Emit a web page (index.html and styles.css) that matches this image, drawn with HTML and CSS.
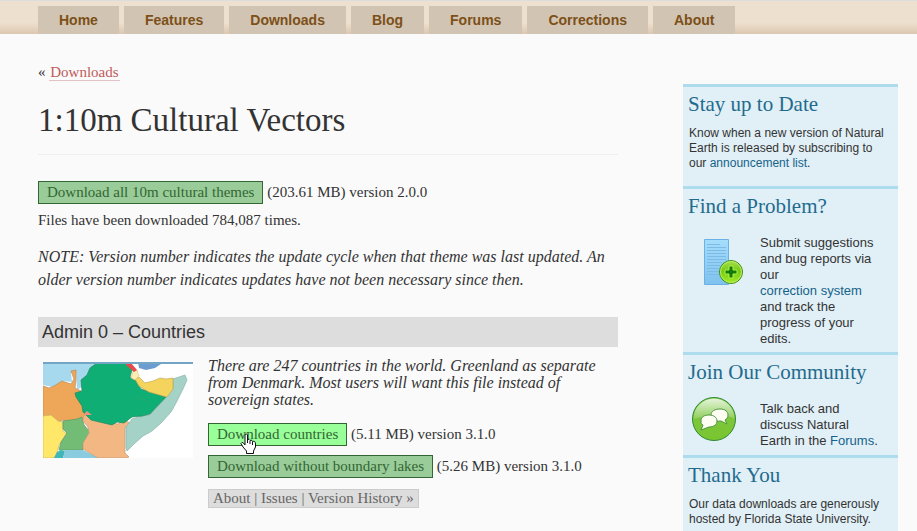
FILE: index.html
```
<!DOCTYPE html>
<html lang="en">
<head>
  <meta charset="UTF-8">
  <meta name="viewport" content="width=device-width, initial-scale=1">
  <title>1:10m Cultural Vectors</title>
  <link rel="stylesheet" href="styles.css">
</head>
<body>

  <nav class="main-nav">
    <a href="#">Home</a>
    <a href="#">Features</a>
    <a href="#">Downloads</a>
    <a href="#">Blog</a>
    <a href="#">Forums</a>
    <a href="#">Corrections</a>
    <a href="#">About</a>
  </nav>

  <div class="page">
    <main>
      <p class="breadcrumb">« <a href="#">Downloads</a></p>
      <h1>1:10m Cultural Vectors</h1>

      <p class="download-row"><a class="download" href="#">Download all 10m cultural themes</a> (203.61 MB) version 2.0.0</p>
      <p class="count">Files have been downloaded 784,087 times.</p>
      <p class="note">NOTE: Version number indicates the update cycle when that theme was last updated. An older version number indicates updates have not been necessary since then.</p>

      <h2>Admin 0 – Countries</h2>
      <div class="theme">
        <svg class="map" viewBox="0 0 150 96" role="img" aria-label="Map of countries">
          <rect width="150" height="96" fill="#fff"/>
          <path d="M0 0h56L46 10 40 24 34 28 33 10 28 11 29 20 20 19 10 25 0 23Z" fill="#a6d9ee"/>
          <path d="M95 0h26l-9 6-9 2-7-2Z" fill="#6c9dd0"/>
          <path d="M0 24l6 2 5-2 8-5 9 3 3-5-3-8 5-1v10l-1 8 6 3 1 6 8 15-3 7-5 1-5 3-14-3-5 2-7-6-8 1Z" fill="#eea758" stroke="#b98e5d" stroke-width=".7"/>
          <path d="M0 54l8-1 7 6 5 1 0 9 4 3-8 11-2 8-3 5H0Z" fill="#ffe76a" stroke="#c9b467" stroke-width=".7"/>
          <path d="M20 59l14-2 5-2 2 8 6 7-3 7-4 5v6H16l2-8 6-9-4-4Z" fill="#72bc75" stroke="#5d986c" stroke-width=".7"/>
          <path d="M14 90l4-2 4 1-2 7h-9Z" fill="#40b7b6"/>
          <path d="M22 88h18l16 8H20Z" fill="#8accdf"/>
          <path d="M40 55l4-4 8 4 8 3 8 3 7 1 6-4 6 3-5 5v25l4 4-4 1H55l-15-9v-6l6-10-1-6-5-6Z" fill="#f3b783" stroke="#c1997b" stroke-width=".7"/>
          <path d="M83 65l6-8 10-3 8-1 13-14 4-5 6-8V17l12-4 2 5-4 9-7 14-5 9-10 11-9 8-9 5-9 8-7 7-1-4Z" fill="#a4d2c6" stroke="#8ab5ad" stroke-width=".7"/>
          <path d="M55 1h30l4 7-2 7 6 4 5 8 25 8-16 17-8 2-10 1-8 6-7-1-5 3-21-5-8-8-1-6-6-9-1-4 7-2-1-11 6-5 3-7 7-5Z" fill="#0eae74" stroke="#26865e" stroke-width=".7"/>
          <path d="M92 17l4-2 6 6 8-2 7-3 6 1 7-1v11l-6 8-18-5-10-6Z" fill="#f5d45e" stroke="#c2aa55" stroke-width=".7"/>
          <path d="M90 9l4-1 2 6-4 4-4-2Z" fill="#fbeeb0" stroke="#c8b77f" stroke-width=".5"/>
          <path d="M83 1h5l6 7-3 2-8-7Z" fill="#e44b4a"/>
          <path d="M40 53l4-4 5 4Z" fill="#ee927c"/>
          <path d="M92 34l12 5" stroke="#29a96e" fill="none"/>
          <rect width="150" height="2" fill="#73a5c4"/>
        </svg>
        <div class="theme-info">
          <p class="about-theme">There are 247 countries in the world. Greenland as separate from Denmark. Most users will want this file instead of sovereign states.</p>
          <p class="download-row">
            <a class="download active" href="#">Download countries<svg class="pointer" viewBox="0 0 17 22" aria-hidden="true"><path d="M5 1.500Q6.500 0 7.500 2V7Q9 5.500 10 7.500 11.500 6 12.500 8.500 15.500 7.500 15.500 11V14L13.500 18V20.500H6.500V18L3 14 1 10.500Q2 8.500 3.500 10L5 12Z" fill="#fff" stroke="#111"/><path d="M7.500 7v3M10 8v3M12.500 9v3" stroke="#111" fill="none"/></svg></a>
            (5.11 MB) version 3.1.0
          </p>
          <p class="download-row"><a class="download" href="#">Download without boundary lakes</a> (5.26 MB) version 3.1.0</p>
          <p class="more"><a href="#">About</a> | <a href="#">Issues</a> | <a href="#">Version History »</a></p>
        </div>
      </div>
    </main>

    <aside>
      <section>
        <h3>Stay up to Date</h3>
        <p>Know when a new version of Natural Earth is released by subscribing to our <a href="#">announcement list</a>.</p>
      </section>
      <section class="has-icon">
        <h3>Find a Problem?</h3>
        <div class="with-icon problem">
          <svg width="60" height="60" viewBox="0 0 60 60" aria-hidden="true">
            <defs>
              <linearGradient id="sheet" x2="0" y2="1"><stop stop-color="#a5ddfc"/><stop offset="1" stop-color="#7fc2ee"/></linearGradient>
              <linearGradient id="plus" x2="0" y2="1"><stop stop-color="#a9df4c"/><stop offset=".45" stop-color="#72cb16"/><stop offset="1" stop-color="#a5ed22"/></linearGradient>
            </defs>
            <path d="M9.500 9.500h24v45h-24Z" fill="url(#sheet)" stroke="#6bb1e9"/>
            <path d="M12 14.500h13M12 17.500h19M12 20.500h19M12 23.500h19M12 26.500h19M12 29.500h19M12 32.500h15M12 35.500h13M12 38.500h12M12 41.500h12M12 44.500h13" stroke="#7dbbe6"/>
            <circle cx="36" cy="42" r="11.500" fill="url(#plus)" stroke="#3f8a1c"/>
            <circle cx="36" cy="42" r="10.500" fill="none" stroke="#b9ed68"/>
            <path d="M34 36h4v4h4v4h-4v4h-4v-4h-4v-4h4Z" fill="#147c08" stroke="#b5f047"/>
          </svg>
          <p>Submit suggestions and bug reports via our <br><a href="#">correction system</a> and track the progress of your edits.</p>
        </div>
      </section>
      <section class="has-icon">
        <h3>Join Our Community</h3>
        <div class="with-icon">
          <svg width="60" height="60" viewBox="0 0 60 60" aria-hidden="true">
            <defs>
              <linearGradient id="ball" x2="0" y2="1"><stop stop-color="#80c747"/><stop offset="1" stop-color="#79c52f"/></linearGradient>
              <linearGradient id="shine" x2="0" y2="1"><stop stop-color="#fff" stop-opacity=".8"/><stop offset="1" stop-color="#fff" stop-opacity=".15"/></linearGradient>
            </defs>
            <circle cx="29" cy="29" r="21.500" fill="url(#ball)" stroke="#2f8a38"/>
            <path d="M8.500 29a20.500 20.500 0 0 1 41 0Q38 21 8.500 29Z" fill="url(#shine)"/>
            <path d="M35 19c5 0 8 2.500 8 6 0 2-1 4-3 5l2 4-6-3c-6 1-10-2-10-6s4-6 9-6Z" fill="#fffef2" stroke="#4a9640"/>
            <path d="M24 25c5 0 8 2.500 8 6s-3 6-8 6l-8 3 2-5c-2-1-2-2-2-4 0-4 3-6 8-6Z" fill="#fffef2" stroke="#4a9640"/>
          </svg>
          <p>Talk back and discuss Natural Earth in the <a href="#">Forums</a>.</p>
        </div>
      </section>
      <section>
        <h3>Thank You</h3>
        <p>Our data downloads are generously hosted by Florida State University.</p>
      </section>
    </aside>
  </div>

</body>
</html>
```
FILE: styles.css
```
* {
  box-sizing: border-box;
}
body {
  margin: 0;
  background: #fafafa;
  color: #333;
  font: 15px/23px "Liberation Serif", serif;
}
h1, h2, h3, p {
  margin: 0;
  font-weight: normal;
}
a {
  text-decoration: none;
}

.main-nav {
  display: flex;
  gap: 5px;
  padding: 5px 38px 0;
  border-top: 1px solid #ddd;
  background: linear-gradient(#eee0cf 65%, #dcc7b0);
}
.main-nav a {
  padding: 0 21px;
  background: #d2c4b2;
  color: #7c5018;
  font: bold 14px/28px "Liberation Sans", sans-serif;
}

.page {
  display: grid;
  grid-template-columns: 1fr 215px;
  column-gap: 65px;
  padding: 0 19px 0 38px;
}
main {
  padding-top: 27px;
}
.breadcrumb a {
  padding: 0 1px;
  border-bottom: 1px solid #e3c3c8;
  color: #c05a5a;
}
h1 {
  margin: 16px 0 25px;
  padding-bottom: 14px;
  border-bottom: 1px solid #eee;
  font-size: 33px;
  line-height: 40px;
}
.download-row {
  line-height: 24px;
}
.download {
  position: relative;
  display: inline-block;
  padding: 0 8px;
  border: 1px solid #363;
  background: #9c9;
  color: #363;
  line-height: 21px;
}
.download.active {
  background: #9f9;
}
.pointer {
  position: absolute;
  top: 9px;
  left: 31px;
  width: 17px;
  height: 22px;
}
.count {
  margin-top: 5px;
}
.note {
  margin-top: 13px;
  font-size: 16px;
  font-style: italic;
}

h2 {
  margin: 26px 0 15px;
  padding: 0 4px;
  background: #ddd;
  font: 18px/30px "Liberation Sans", sans-serif;
}
.theme {
  display: flex;
  gap: 15px;
  padding-left: 5px;
}
.map {
  flex: none;
  width: 150px;
  height: 96px;
}
.theme-info {
  margin-top: -5px;
}
.about-theme {
  font-size: 16px;
  font-style: italic;
  line-height: 17px;
}
.theme-info .download-row {
  margin-top: 8px;
}
.theme-info .about-theme + .download-row {
  margin-top: 14px;
}
.more {
  width: fit-content;
  margin-top: 11px;
  padding: 0 4px;
  border: 1px solid #ccc;
  background: #ddd;
  color: #666;
  line-height: 17px;
}
.more a {
  color: #666;
}

aside {
  margin-top: 50px;
  background: #e1eff6;
  font: 12px/15px "Liberation Sans", sans-serif;
}
aside section {
  padding-bottom: 15px;
  border-top: 3px solid #addded;
}
aside section.has-icon,
aside section:last-child {
  padding-bottom: 5px;
}
aside h3 {
  padding: 5px 5px 0;
  color: #1f6b8e;
  font: 21px/24px "Liberation Serif", serif;
}
aside p {
  padding: 10px 6px 0;
}
aside a {
  color: #13638a;
}
.with-icon {
  display: flex;
  align-items: flex-start;
  font-size: 13px;
  line-height: 16px;
}
.with-icon svg {
  flex: none;
  margin: 6px 0 0 2px;
}
.with-icon p {
  padding: 17px 16px 0 15px;
}
.with-icon.problem svg {
  margin: 12px 0 0 12px;
}
.with-icon.problem p {
  padding-left: 5px;
}
```
